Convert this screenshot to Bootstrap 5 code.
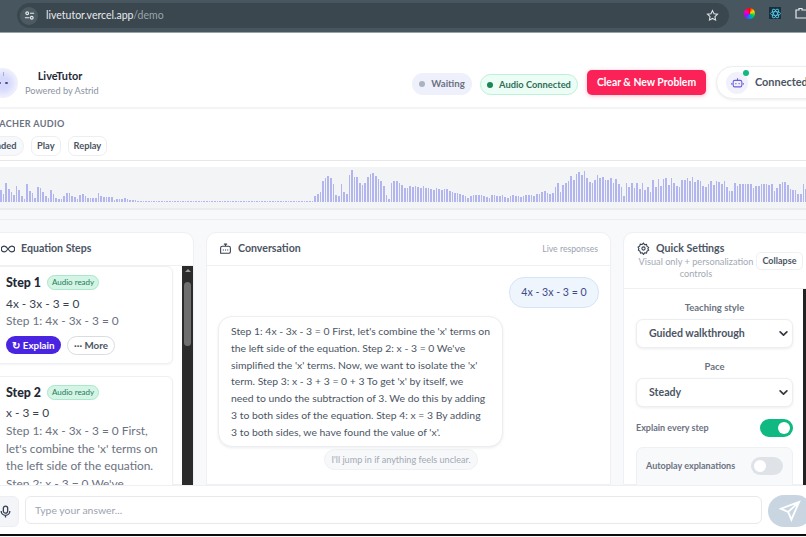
<!DOCTYPE html>
<html lang="en">
<head>
    <meta charset="UTF-8">
    <meta name="viewport" content="width=device-width, initial-scale=1.0">
    <title>LiveTutor</title>
    <link href="https://cdn.jsdelivr.net/npm/bootstrap@5.3.0/dist/css/bootstrap.min.css" rel="stylesheet">
    <style>
        html, body { height: 100%; overflow: hidden; }
        body { font-family: Lato, "Noto Sans", sans-serif; background: #f8f9fb; color: #374151; font-size: 11px; }
        .app-shell { height: 537px; width: 806px; overflow: hidden; }
        .chrome-bar { height: 33px; flex: none; background: #48575f; border-bottom: 1px solid #94a3a8; padding: 3px 0 3px 17px; }
        .url-pill { width: 712px; height: 25px; flex: none; border-radius: 13px; background: #3a474e; padding-left: 3px; color: #e8eaed; font-size: 10.5px; }
        .url-icon { width: 18px; height: 18px; border-radius: 50%; background: #4c5a62; }
        .url-faded { color: #9aa5ab; }
        .url-star { margin-right: 10px; }
        .chrome-exts { margin: 4px 0 0 15px; gap: 14px; flex: none; }
        .ext-ball { width: 11px; height: 11px; flex: none; border-radius: 50%; background: conic-gradient(#f00, #fd0, #0c4, #08f, #a0f, #f0a, #f00); }
        .ext-react { width: 12px; height: 12px; flex: none; background: #16313d; }
        .top-head { height: 76px; flex: none; background: #fff; border-bottom: 2px solid #f3f4f6; padding-top: 35px; margin-left: -12px; width: 840px; }
        .bot-face { position: relative; width: 30px; height: 30px; flex: none; border-radius: 50%; border: 1px solid #eceef8; background: radial-gradient(circle, #d6d9fb 30%, #f1f2fe 75%); gap: 4px; }
        .bot-face::before { content: ""; position: absolute; left: 14px; top: 3px; width: 1px; height: 4px; background: #a9acd8; }
        .bot-face i { width: 2.500px; height: 2.500px; border-radius: 50%; background: #4b4f8a; }
        .brand-col { width: 84px; flex: none; margin-top: 1px; }
        .brand-name { text-align: center; font-size: 10.9px; font-weight: 700; color: #1f2937; line-height: 14px; }
        .brand-sub { font-size: 9.2px; color: #8b93a1; white-space: nowrap; margin: 1px 0 0 7px; line-height: 14px; }
        .head-right { margin-left: 310px; }
        .pill-wait { height: 22px; width: 60px; flex: none; border-radius: 11px; background: #eef0fb; color: #6b7280; font-size: 9.6px; font-weight: 700; margin-top: 5px; gap: 6px; }
        .pill-audio { height: 21px; width: 98px; flex: none; border-radius: 11px; background: #ecfdf5; border: 1px solid #bcf0d8; color: #2f6f57; font-size: 9.3px; font-weight: 700; margin-left: 8px; margin-top: 6px; gap: 6px; }
        .pill-dot { width: 6px; height: 6px; border-radius: 50%; }
        .btn-clear { width: 119px; height: 25px; flex: none; padding: 0; margin-left: 9px; margin-top: 2px; background: #fb2257; border: 0; border-radius: 5px; color: #fff; font-size: 10.4px; font-weight: 700; box-shadow: 0 1px 4px rgba(251,34,87,.3); }
        .conn-box { position: relative; width: 110px; height: 33px; flex: none; margin-left: 10px; margin-top: -2px; background: #fff; border: 1px solid #eceef2; border-radius: 17px; box-shadow: 0 1px 3px rgba(0,0,0,.08); padding-left: 9px; font-size: 10.9px; font-weight: 700; color: #4b5563; gap: 7px; }
        .conn-icon { width: 22px; height: 22px; border-radius: 50%; background: #f0f1fb; }
        .conn-dot { position: absolute; left: 26px; top: 3px; width: 6px; height: 6px; border-radius: 50%; background: #10b981; }
        .audio-row { height: 52px; flex: none; background: #fff; border-bottom: 1px solid #e5e7eb; padding-top: 9px; margin-left: -17px; }
        .audio-label { font-size: 9.1px; font-weight: 700; letter-spacing: .3px; color: #6b7280; line-height: 12px; margin-left: 5px; }
        .audio-btns { margin-top: 6px; gap: 7px; }
        .audio-btn { height: 20px; padding: 0 5px; background: #fff; border: 1px solid #eceef2; border-radius: 7px; color: #4b5563; font-size: 9.3px; font-weight: 700; line-height: 18px; }
        .audio-btn-ended { background: #f6f8fb; border-radius: 10px; width: 41px; }
        .wave-wrap { height: 49px; flex: none; background: #fff; padding-top: 6px; }
        .wave-box { height: 43px; background: #f3f4f6; border-bottom: 2px solid #e9ebee; padding-bottom: 6px; gap: 1px; overflow: hidden; }
        .wave-bar { width: 1.65px; flex: none; background: #b3b5ee; }
        .main-row { height: 266px; flex: none; padding-top: 12px; border-top: 1px solid #eceef1; margin-top: 9px; gap: 12px; overflow: hidden; }
        .panel { background: #fff; border: 1px solid #eef0f3; border-radius: 10px 10px 0 0; }
        .panel-head { height: 33px; gap: 6px; border-bottom: 1px solid #eef0f3; font-size: 10.6px; font-weight: 700; color: #4b5563; }
        .steps-panel { width: 210px; margin-left: -16px; flex: none; }
        .steps-scroll { height: 220px; overflow: hidden; }
        .steps-list { width: 197px; flex: none; overflow: hidden; padding-right: 9px; }
        .step-box { background: #fff; border: 1px solid #eef0f3; border-radius: 6px; box-shadow: 0 1px 2px rgba(0,0,0,.05); padding: 7px 0 0 20px; margin-bottom: 12px; font-size: 11.9px; line-height: 17.6px; color: #4b5563; }
        .step-title { font-size: 12.4px; font-weight: 900; color: #1f2937; }
        .step-top { gap: 6px; }
        .audio-tag { height: 15px; width: 52px; border-radius: 8px; background: #d4f5e5; border: 1px solid #a9e8cb; color: #237a5a; font-size: 8px; line-height: 13px; text-align: center; }
        .step-eq { color: #374151; margin-top: 3px; }
        .step-text { color: #6b7280; }
        .step-actions { gap: 6px; margin: 6px 0 8px; align-items: center; }
        .btn-explain { height: 18px; width: 55px; padding: 0; background: #4a25e1; border: 0; border-radius: 9px; color: #fff; font-size: 9.8px; font-weight: 700; line-height: 18px; }
        .btn-more { height: 19px; width: 48px; padding: 0; background: #fff; border: 1px solid #d9dde3; border-radius: 10px; color: #4b5563; font-size: 9.8px; font-weight: 700; line-height: 17px; }
        .fake-scroll { width: 11px; flex: none; background: #2b2b2b; position: relative; }
        .fake-scroll::before { content: ""; position: absolute; left: 3px; top: 3px; border: 3px solid transparent; border-top: 0; border-bottom: 3px solid #9b9b9b; }
        .fake-thumb { position: absolute; left: 2px; top: 16px; width: 7px; height: 64px; border-radius: 4px; background: #6e6e6e; }
        .chat-panel { width: 405px; flex: none; }
        .chat-head { padding: 0 12px; }
        .chat-live { font-size: 8.7px; font-weight: 400; color: #9ca3af; }
        .bubble-user { width: 90px; height: 31px; background: #eff5fd; border: 1px solid #d6e4f7; border-radius: 15px; color: #3d4a86; font-size: 10.6px; margin: 11px 11px 0 auto; }
        .bubble-bot { width: 285px; height: 131px; margin: 8px 0 0 11px; padding: 6px 0 0 12px; background: #fff; border: 1px solid #eceef2; border-radius: 14px; box-shadow: 0 1px 3px rgba(0,0,0,.08); font-size: 10.4px; line-height: 16.8px; color: #4b5563; white-space: nowrap; }
        .chat-hint { width: 154px; height: 21px; margin: 2px 0 0 117px; background: #f7f8fa; border: 1px solid #eef0f3; border-radius: 11px; color: #a3a9b4; font-size: 9.1px; }
        .settings-panel { width: 190px; flex: none; }
        .settings-head { height: 56px; border-bottom: 1px solid #eef0f3; padding: 8px 0 0 13px; position: relative; }
        .settings-title { font-size: 10.6px; font-weight: 700; color: #4b5563; line-height: 14px; gap: 6px; }
        .settings-sub { width: 118px; text-align: center; font-size: 9.2px; line-height: 12px; color: #a3a9b4; margin: 1px 0 0 0; }
        .btn-collapse { position: absolute; left: 132px; top: 19px; width: 47px; height: 18px; padding: 0; background: #fff; border: 1px solid #eef0f3; border-radius: 5px; font-size: 9px; font-weight: 700; color: #4b5563; }
        .settings-body { height: 196px; padding: 12px 0 0 12px; border-right: 3px solid #222; width: 182px; overflow: hidden; }
        .field-label { width: 157px; text-align: center; font-size: 9.5px; line-height: 13px; color: #6b7280; font-weight: 700; margin-bottom: 5px; }
        .set-select { width: 157px; height: 29px; padding: 0 0 0 12px; margin-bottom: 12px; font-size: 10.6px; font-weight: 700; color: #4b5563; background-color: #fff; border: 1px solid #eceef2; border-radius: 7px; box-shadow: 0 1px 3px rgba(0,0,0,.08); background-image: url("data:image/svg+xml,%3csvg xmlns='http://www.w3.org/2000/svg' viewBox='0 0 16 16'%3e%3cpath fill='none' stroke='%23343a40' stroke-linecap='round' stroke-linejoin='round' stroke-width='3' d='m2 5 6 6 6-6'/%3e%3c/svg%3e"); background-position: right 4px center; background-size: 9px 9px; }
        .toggle-line { width: 157px; font-size: 9px; font-weight: 700; color: #6b7280; }
        .switch-on { width: 33px; height: 18px; border-radius: 9px; background: #10b981; position: relative; }
        .switch-on::after { content: ""; position: absolute; right: 3px; top: 3px; width: 12px; height: 12px; border-radius: 50%; background: #fff; }
        .switch-off { width: 32px; height: 18px; border-radius: 9px; background: #dfe3e8; position: relative; }
        .switch-off::after { content: ""; position: absolute; left: 3px; top: 3px; width: 12px; height: 12px; border-radius: 50%; background: #fff; }
        .autoplay-box { width: 157px; height: 60px; margin-top: 10px; padding: 9px 9px 0; background: #f8f9fb; border: 1px solid #eef0f3; border-radius: 7px; }
        .bottom-bar { height: 49px; flex: none; background: #fff; border-top: 1px solid #eef0f3; padding-top: 10px; }
        .mic-btn { width: 35px; height: 31px; flex: none; margin-left: -16px; padding-left: 14px; background: #f3f5f9; border: 1px solid #eceef2; border-radius: 6px; }
        .answer-input { width: 737px; height: 28px; flex: none; margin: 0 6px; padding: 0 9px; background: #fff; border: 1px solid #e7e9ed; border-radius: 6px; font-size: 10.4px; box-shadow: none; }
        .answer-input::placeholder { color: #9ca3af; }
        .send-btn { width: 44px; height: 32px; margin-top: -1px; flex: none; background: #c9d6e2; border-radius: 16px; }
        .black-edge { height: 2px; flex: none; background: #0c0c0c; }
    </style>
</head>
<body>
    <div class="app-shell d-flex flex-column">
        <!-- browser toolbar -->
        <div class="chrome-bar d-flex align-items-start">
            <div class="url-pill d-flex align-items-center gap-1">
                <span class="url-icon d-flex align-items-center justify-content-center">
                    <svg width="11" height="11" viewBox="0 0 12 12" fill="none" stroke="#e8eaed" stroke-width="1.2"><circle cx="3.5" cy="3.5" r="1.5"/><path d="M6.5 3.5H11M1 8.5h5"/><circle cx="8.5" cy="8.5" r="1.5"/></svg>
                </span>
                <span class="ms-1">livetutor.vercel.app<span class="url-faded">/demo</span></span>
                <svg class="ms-auto url-star" width="13" height="13" viewBox="0 0 24 24" fill="none" stroke="#dfe3e6" stroke-width="2"><path d="M12 3l2.8 5.9 6.4.8-4.7 4.4 1.2 6.4L12 17.4l-5.7 3.1 1.2-6.4-4.7-4.4 6.4-.8z"/></svg>
            </div>
            <div class="chrome-exts d-flex align-items-center">
                <span class="ext-ball"></span>
                <span class="ext-react d-flex align-items-center justify-content-center">
                    <svg width="11" height="11" viewBox="0 0 24 24" fill="none" stroke="#61dafb" stroke-width="1.6"><ellipse cx="12" cy="12" rx="11" ry="4.2"/><ellipse cx="12" cy="12" rx="11" ry="4.2" transform="rotate(60 12 12)"/><ellipse cx="12" cy="12" rx="11" ry="4.2" transform="rotate(120 12 12)"/></svg>
                </span>
                <svg class="flex-shrink-0" width="12" height="12" viewBox="0 0 12 12" fill="none" stroke="#e8eaed" stroke-width="1.2"><path d="M1 3h3V1.500h3V3h5v8H1z"/></svg>
            </div>
        </div>

        <!-- header -->
        <div class="top-head d-flex align-items-start">
            <div class="bot-face d-flex align-items-center justify-content-center"><i></i><i></i></div>
            <div class="brand-col">
                <div class="brand-name">LiveTutor</div>
                <div class="brand-sub">Powered by Astrid</div>
            </div>
            <div class="head-right d-flex align-items-start">
                <span class="pill-wait d-flex align-items-center justify-content-center"><span class="pill-dot bg-secondary opacity-50"></span>Waiting</span>
                <span class="pill-audio d-flex align-items-center justify-content-center"><span class="pill-dot bg-success"></span>Audio Connected</span>
                <button class="btn btn-clear">Clear &amp; New Problem</button>
                <div class="conn-box d-flex align-items-center">
                    <span class="conn-icon d-flex align-items-center justify-content-center">
                        <svg width="13" height="13" viewBox="0 0 24 24" fill="none" stroke="#6d5fe0" stroke-width="2"><rect x="4" y="8" width="16" height="12" rx="3"/><path d="M12 8V4M1.500 13v3M22.500 13v3M9 13v2M15 13v2"/></svg>
                    </span>
                    <span>Connected</span>
                    <span class="conn-dot"></span>
                </div>
            </div>
        </div>

        <!-- teacher audio -->
        <div class="audio-row">
            <div class="audio-label">TEACHER AUDIO</div>
            <div class="audio-btns d-flex">
                <button class="audio-btn audio-btn-ended">Ended</button>
                <button class="audio-btn">Play</button>
                <button class="audio-btn">Replay</button>
            </div>
        </div>

        <div class="wave-wrap">
            <div class="wave-box d-flex align-items-end" id="wave"></div>
        </div>

        <!-- three panels -->
        <div class="main-row d-flex">
            <div class="panel steps-panel">
                <div class="panel-head d-flex align-items-center ps-3">
                    <svg width="14" height="8" viewBox="0 0 24 12" fill="none" stroke="#374151" stroke-width="2"><path d="M12 6C9 1.500 7 1 5.500 1a5 5 0 0 0 0 10C7 11 9 10.500 12 6c3-4.500 5-5 6.500-5a5 5 0 0 1 0 10C17 11 15 10.500 12 6z"/></svg>
                    Equation Steps
                </div>
                <div class="d-flex steps-scroll">
                    <div class="steps-list">
                        <div class="step-box">
                            <div class="step-top d-flex align-items-center"><span class="step-title">Step 1</span><span class="audio-tag">Audio ready</span></div>
                            <div class="step-eq">4x - 3x - 3 = 0</div>
                            <div class="step-text">Step 1: 4x - 3x - 3 = 0</div>
                            <div class="step-actions d-flex">
                                <button class="btn btn-explain">↻ Explain</button>
                                <button class="btn btn-more">··· More</button>
                            </div>
                        </div>
                        <div class="step-box">
                            <div class="step-top d-flex align-items-center"><span class="step-title">Step 2</span><span class="audio-tag">Audio ready</span></div>
                            <div class="step-eq">x - 3 = 0</div>
                            <div class="step-text">Step 1: 4x - 3x - 3 = 0 First,<br>let's combine the 'x' terms on<br>the left side of the equation.<br>Step 2: x - 3 = 0 We've</div>
                        </div>
                    </div>
                    <div class="fake-scroll"><div class="fake-thumb"></div></div>
                </div>
            </div>

            <div class="panel chat-panel">
                <div class="panel-head chat-head d-flex align-items-center">
                    <svg width="13" height="13" viewBox="0 0 24 24" fill="none" stroke="#374151" stroke-width="2"><path d="M6 6h12a3 3 0 0 1 3 3v7a3 3 0 0 1-3 3H3v-10a3 3 0 0 1 3-3z"/><path d="M12 6V2M9 2h6M8 12v2M12 12v2M16 12v2"/></svg>
                    Conversation
                    <span class="chat-live ms-auto">Live responses</span>
                </div>
                <div class="bubble-user d-flex align-items-center justify-content-center">4x - 3x - 3 = 0</div>
                <div class="bubble-bot">Step 1: 4x - 3x - 3 = 0 First, let's combine the 'x' terms on<br>the left side of the equation. Step 2: x - 3 = 0 We've<br>simplified the 'x' terms. Now, we want to isolate the 'x'<br>term. Step 3: x - 3 + 3 = 0 + 3 To get 'x' by itself, we<br>need to undo the subtraction of 3. We do this by adding<br>3 to both sides of the equation. Step 4: x = 3 By adding<br>3 to both sides, we have found the value of 'x'.</div>
                <div class="chat-hint d-flex align-items-center justify-content-center">I'll jump in if anything feels unclear.</div>
            </div>

            <div class="panel settings-panel">
                <div class="settings-head">
                    <div class="settings-title d-flex align-items-center">
                        <svg width="13" height="13" viewBox="0 0 24 24" fill="none" stroke="#374151" stroke-width="2"><circle cx="12" cy="12" r="3"/><path d="M12 2l2 3 3.500-.5 1 3.500 3 2-1.500 2.500 1.500 2.500-3 2-1 3.500-3.500-.5-2 3-2-3-3.500.5-1-3.500-3-2L3.500 12 2 9.500 5 7.500l1-3.500 3.500.5z"/></svg>
                        Quick Settings
                    </div>
                    <div class="settings-sub">Visual only + personalization controls</div>
                    <button class="btn btn-collapse">Collapse</button>
                </div>
                <div class="settings-body">
                    <div class="field-label">Teaching style</div>
                    <select class="form-select set-select"><option>Guided walkthrough</option></select>
                    <div class="field-label">Pace</div>
                    <select class="form-select set-select"><option>Steady</option></select>
                    <div class="toggle-line d-flex align-items-center justify-content-between">Explain every step<span class="switch-on"></span></div>
                    <div class="autoplay-box">
                        <div class="toggle-line d-flex align-items-center justify-content-between w-100">Autoplay explanations<span class="switch-off"></span></div>
                    </div>
                </div>
            </div>
        </div>

        <!-- answer bar -->
        <div class="bottom-bar d-flex align-items-start">
            <div class="mic-btn d-flex align-items-center">
                <svg width="13" height="15" viewBox="0 0 24 24" fill="none" stroke="#374151" stroke-width="2.400"><rect x="8" y="2" width="8" height="13" rx="4"/><path d="M4 11a8 8 0 0 0 16 0M12 19v4"/></svg>
            </div>
            <input class="form-control answer-input" type="text" placeholder="Type your answer...">
            <div class="send-btn d-flex align-items-center justify-content-center">
                <svg width="22" height="22" viewBox="0 0 24 24" fill="none" stroke="#fff" stroke-width="2"><path d="M22 2L2 9.500l8 3.500 3.500 8.500zM10 13L22 2"/></svg>
            </div>
        </div>
        <div class="black-edge"></div>
    </div>

    <script src="https://cdn.jsdelivr.net/npm/bootstrap@5.3.0/dist/js/bootstrap.bundle.min.js"></script>
    <script>
        const heights = [12,8,19,13,10,7,16,12,6,3,18,11,9,4,15,14,10,6,4,12,8,4,3,3,6,9,9,6,5,3,7,8,6,4,4,4,4,9,6,5,5,5,5,2,3,3,3,4,3,2,2,2];
        for (let i = 0; i < 67; i++) heights.push(1);
        heights.push(6,8,10,21,24,26,24,18,7,6,18,10,8,27,32,25,25,19,17,19,25,28,29,26,23,21,16,7,3,19,21,21,19,17,14,14);
        heights.push(16,15,16,15,14,16,14,14,13,12,14,13,12,13,13,11,10,9,9,8,7,6,4,6,7,7,7,7,6,5,4,7,7,6,6,7,5,4,6,7,6,6,5,6,7,7,7,6,8,8,10,11,9,8,9,15,19,10,17,19,21,26,22,28,30,27,31,24,20,19,22,27,24,25,22,22,24,19,23,18,15,6,19,15,19,14,19,13,19,12,15,10,22,15,23,16,23,24,17,24,19,16,15,22,22,24,21,25,20,22,21,16,15,18,21,17,21,20,18,21,15,11,11,19,16,18,18,18,18,18,14,16,16,18,18,18,17,18,11,14,18,20,20,17,13,12,12,8,8,18,13,23);
        const wave = document.getElementById('wave');
        heights.forEach(function(h) {
            const bar = document.createElement('div');
            bar.className = 'wave-bar';
            bar.style.height = h + 'px';
            wave.appendChild(bar);
        });
    </script>
</body>
</html>
